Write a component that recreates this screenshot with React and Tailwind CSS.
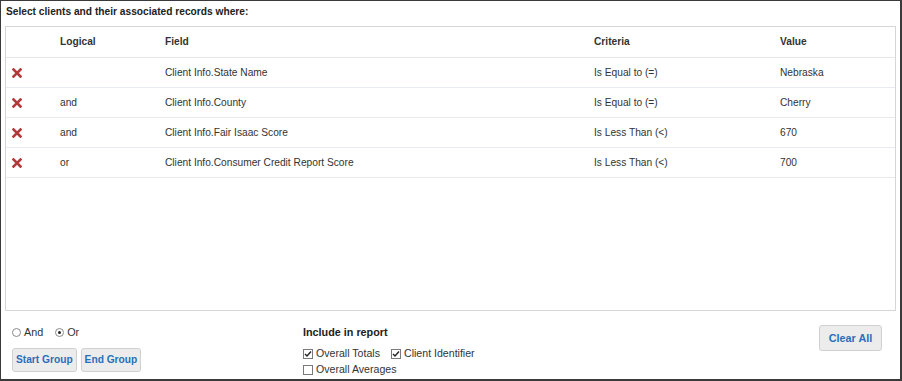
import React from 'react';

const rows = [
  { logical: '', field: 'Client Info.State Name', criteria: 'Is Equal to (=)', value: 'Nebraska' },
  { logical: 'and', field: 'Client Info.County', criteria: 'Is Equal to (=)', value: 'Cherry' },
  { logical: 'and', field: 'Client Info.Fair Isaac Score', criteria: 'Is Less Than (<)', value: '670' },
  { logical: 'or', field: 'Client Info.Consumer Credit Report Score', criteria: 'Is Less Than (<)', value: '700' },
];

function RemoveIcon() {
  return (
    <svg width="10" height="10" viewBox="0 0 10 10">
      <path d="M1.5 1.5 L8.5 8.5 M8.5 1.5 L1.5 8.5" stroke="#b33a3a" strokeWidth="2.6" strokeLinecap="square" />
    </svg>
  );
}

function Radio({ checked }) {
  return (
    <span className="inline-flex w-[9px] h-[9px] rounded-full border border-[#8a8a8a] bg-white items-center justify-center">
      {checked && <span className="w-[3px] h-[3px] rounded-full bg-[#222]" />}
    </span>
  );
}

function Check({ checked }) {
  return (
    <span className="inline-flex w-[10px] h-[10px] border border-[#7a7a7a] bg-white items-center justify-center">
      {checked && (
        <svg width="8" height="8" viewBox="0 0 8 8">
          <path d="M1 4 L3 6 L7 1.5" fill="none" stroke="#222" strokeWidth="1.4" />
        </svg>
      )}
    </span>
  );
}

function Btn({ children }) {
  return (
    <button className="h-[24px] px-[3px] rounded-[3px] border border-[#d0d0d0] bg-[#ececec] text-[#2a6ebb] font-bold text-[10.2px]">
      {children}
    </button>
  );
}

export default function App() {
  return (
    <div
      className="w-[902px] h-[381px] bg-white border-l border-t border-r-2 border-b-2 border-[#3a3a3a] text-[10.2px] text-[#333] overflow-hidden"
      style={{ fontFamily: '"Liberation Sans", Arial, sans-serif' }}
    >
      <div className="h-[25px] pl-[5px] pt-[4px] font-bold text-[#222] leading-[14px]">
        Select clients and their associated records where:
      </div>

      <div className="ml-[4px] mr-[4px] h-[285px] border border-[#d6d6d6]">
        <div className="flex h-[31px] items-center border-b border-[#e3e6ec] font-bold text-[#333]">
          <div className="w-[45px]" />
          <div className="w-[105px] pl-[9px]">Logical</div>
          <div className="w-[429px] pl-[9px]">Field</div>
          <div className="w-[186px] pl-[9px]">Criteria</div>
          <div className="flex-1 pl-[9px]">Value</div>
        </div>
        {rows.map((r, i) => (
          <div key={i} className="flex h-[30px] items-center border-b border-[#e8eaf2]">
            <div className="w-[45px] pl-[6px] flex items-center">
              <RemoveIcon />
            </div>
            <div className="w-[105px] pl-[9px]">{r.logical}</div>
            <div className="w-[429px] pl-[9px]">{r.field}</div>
            <div className="w-[186px] pl-[9px]">{r.criteria}</div>
            <div className="flex-1 pl-[9px]">{r.value}</div>
          </div>
        ))}
      </div>

      <div className="flex pt-[13px]">
        <div className="w-[302px] pl-[11px]">
          <div className="flex items-center h-[16px] gap-[3px] text-[10.8px]">
            <Radio />
            <span className="mr-[9px]">And</span>
            <Radio checked />
            <span>Or</span>
          </div>
          <div className="flex gap-[4px] mt-[8px]">
            <Btn>Start Group</Btn>
            <Btn>End Group</Btn>
          </div>
        </div>

        <div className="flex-1">
          <div className="font-bold text-[#222] h-[16px] leading-[16px] text-[10.8px]">Include in report</div>
          <div className="flex items-center gap-[3px] mt-[6px] h-[16px] text-[10.6px]">
            <Check checked />
            <span className="mr-[8px]">Overall Totals</span>
            <Check checked />
            <span>Client Identifier</span>
          </div>
          <div className="flex items-center gap-[3px] h-[16px] text-[10.6px]">
            <Check />
            <span>Overall Averages</span>
          </div>
        </div>

        <div className="pr-[18px] mt-[1px]">
          <button className="h-[26px] w-[63px] rounded-[3px] border border-[#d0d0d0] bg-[#ececec] text-[#2a6ebb] font-bold text-[10.8px]">
            Clear All
          </button>
        </div>
      </div>
    </div>
  );
}
